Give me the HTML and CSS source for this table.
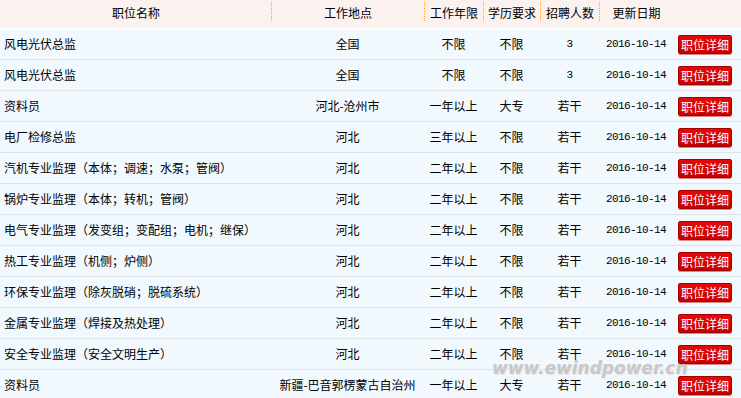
FILE: index.html
```html
<!DOCTYPE html>
<html lang="zh-CN">
<head>
<meta charset="utf-8">
<title>招聘职位</title>
<link rel="stylesheet" href="styles.css">
</head>
<body>
<div class="jobs">
  <div class="head">
    <div class="hc first"><span>职位名称</span></div>
    <div class="hc"><span>工作地点</span></div>
    <div class="hc"><span>工作年限</span></div>
    <div class="hc"><span>学历要求</span></div>
    <div class="hc"><span>招聘人数</span></div>
    <div class="hc"><span>更新日期</span></div>
    <div class="hc first"></div>
  </div>

  <div class="row"><div class="c name">风电光伏总监</div><div class="c">全国</div><div class="c">不限</div><div class="c">不限</div><div class="c num">3</div><div class="c num">2016-10-14</div><div class="c act"><a class="btn">职位详细</a></div></div>
  <div class="row"><div class="c name">风电光伏总监</div><div class="c">全国</div><div class="c">不限</div><div class="c">不限</div><div class="c num">3</div><div class="c num">2016-10-14</div><div class="c act"><a class="btn">职位详细</a></div></div>
  <div class="row"><div class="c name">资料员</div><div class="c">河北-沧州市</div><div class="c">一年以上</div><div class="c">大专</div><div class="c">若干</div><div class="c num">2016-10-14</div><div class="c act"><a class="btn">职位详细</a></div></div>
  <div class="row"><div class="c name">电厂检修总监</div><div class="c">河北</div><div class="c">三年以上</div><div class="c">不限</div><div class="c">若干</div><div class="c num">2016-10-14</div><div class="c act"><a class="btn">职位详细</a></div></div>
  <div class="row"><div class="c name">汽机专业监理（本体；调速；水泵；管阀）</div><div class="c">河北</div><div class="c">二年以上</div><div class="c">不限</div><div class="c">若干</div><div class="c num">2016-10-14</div><div class="c act"><a class="btn">职位详细</a></div></div>
  <div class="row"><div class="c name">锅炉专业监理（本体；转机；管阀）</div><div class="c">河北</div><div class="c">二年以上</div><div class="c">不限</div><div class="c">若干</div><div class="c num">2016-10-14</div><div class="c act"><a class="btn">职位详细</a></div></div>
  <div class="row"><div class="c name">电气专业监理（发变组；变配组；电机；继保）</div><div class="c">河北</div><div class="c">二年以上</div><div class="c">不限</div><div class="c">若干</div><div class="c num">2016-10-14</div><div class="c act"><a class="btn">职位详细</a></div></div>
  <div class="row"><div class="c name">热工专业监理（机侧；炉侧）</div><div class="c">河北</div><div class="c">二年以上</div><div class="c">不限</div><div class="c">若干</div><div class="c num">2016-10-14</div><div class="c act"><a class="btn">职位详细</a></div></div>
  <div class="row"><div class="c name">环保专业监理（除灰脱硝；脱硫系统）</div><div class="c">河北</div><div class="c">二年以上</div><div class="c">不限</div><div class="c">若干</div><div class="c num">2016-10-14</div><div class="c act"><a class="btn">职位详细</a></div></div>
  <div class="row"><div class="c name">金属专业监理（焊接及热处理）</div><div class="c">河北</div><div class="c">二年以上</div><div class="c">不限</div><div class="c">若干</div><div class="c num">2016-10-14</div><div class="c act"><a class="btn">职位详细</a></div></div>
  <div class="row"><div class="c name">安全专业监理（安全文明生产）</div><div class="c">河北</div><div class="c">二年以上</div><div class="c">不限</div><div class="c">若干</div><div class="c num">2016-10-14</div><div class="c act"><a class="btn">职位详细</a></div></div>
  <div class="row"><div class="c name">资料员</div><div class="c">新疆-巴音郭楞蒙古自治州</div><div class="c">一年以上</div><div class="c">大专</div><div class="c">若干</div><div class="c num">2016-10-14</div><div class="c act"><a class="btn">职位详细</a></div></div>

  <div class="watermark">www.ewindpower.cn</div>
</div>
</body>
</html>
```

FILE: styles.css
```css
html, body {
  margin: 0;
  padding: 0;
  background: #f2f9fe;
}

body {
  font-family: "Noto Sans CJK SC", "Noto Sans", sans-serif;
  font-size: 12px;
  color: #000;
}

.jobs {
  position: relative;
  width: 741px;
}

.head,
.row {
  display: grid;
  grid-template-columns: 271px 153px 59px 57px 59px 74px 68px;
}

.head {
  height: 28px;
  background: #fbf1ef;
  border-bottom: 1px solid #ffffff;
}

.hc {
  margin-top: 2px;
  height: 19px;
  border-left: 1px dotted #f5a04a;
  display: flex;
  align-items: flex-end;
  justify-content: center;
}

.hc.first {
  border-left-color: transparent;
}

.hc span {
  line-height: 16px;
  white-space: nowrap;
}

.row {
  height: 30px;
  border-bottom: 1px solid #dfe3e6;
  background: #f2f9fe;
}

.c {
  display: flex;
  align-items: center;
  justify-content: center;
  white-space: nowrap;
  line-height: 16px;
}

.c.name {
  justify-content: flex-start;
  padding-left: 4px;
}

.c.num {
  font-family: "Liberation Mono", "DejaVu Sans Mono", monospace;
  font-size: 11px;
  letter-spacing: -0.6px;
}

.c.act {
  justify-content: flex-start;
  padding-left: 5px;
}

.btn {
  display: block;
  box-sizing: border-box;
  width: 54px;
  height: 19px;
  line-height: 17px;
  text-align: center;
  color: #fff;
  background: linear-gradient(#e60808, #c70000);
  border: 1px solid #a30000;
  border-radius: 2px;
  box-shadow: 0 1px 0 #d88;
  font-size: 12px;
}

.watermark {
  position: absolute;
  left: 492px;
  top: 358px;
  font-family: "DejaVu Sans", sans-serif;
  font-weight: bold;
  font-style: italic;
  font-size: 17px;
  line-height: 20px;
  color: #c8c8c8;
  text-shadow: 1px 1px 0 #e6e6e6;
  pointer-events: none;
}
```
